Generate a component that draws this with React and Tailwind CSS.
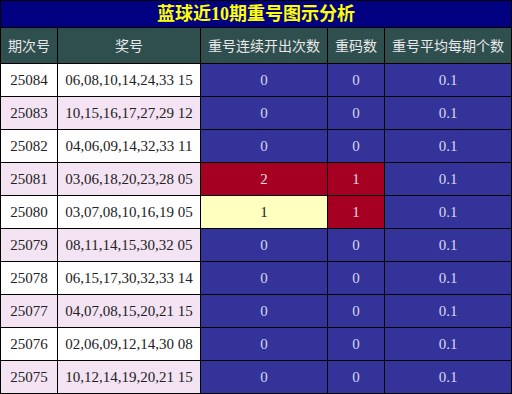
import React from "react";

const rows = [
  ["25084", "06,08,10,14,24,33 15", "0", "0", "0.1"],
  ["25083", "10,15,16,17,27,29 12", "0", "0", "0.1"],
  ["25082", "04,06,09,14,32,33 11", "0", "0", "0.1"],
  ["25081", "03,06,18,20,23,28 05", "2", "1", "0.1"],
  ["25080", "03,07,08,10,16,19 05", "1", "1", "0.1"],
  ["25079", "08,11,14,15,30,32 05", "0", "0", "0.1"],
  ["25078", "06,15,17,30,32,33 14", "0", "0", "0.1"],
  ["25077", "04,07,08,15,20,21 15", "0", "0", "0.1"],
  ["25076", "02,06,09,12,14,30 08", "0", "0", "0.1"],
  ["25075", "10,12,14,19,20,21 15", "0", "0", "0.1"],
];

const BLUE = "bg-[#333399] text-[#d8d8f0]";
const RED = "bg-[#a50021] text-[#f0dce2]";
const YELLOW = "bg-[#ffffc0] text-[#222222]";

function streakCls(v) {
  if (v === "2") return RED;
  if (v === "1") return YELLOW;
  return BLUE;
}

export default function App() {
  return (
    <div className="w-[512px] h-[394px] bg-black p-px">
      <div className="grid grid-cols-[56px_142px_126px_56px_126px] grid-rows-[26px_35px_repeat(10,32px)] gap-px font-['Liberation_Serif','Noto_Sans_CJK_SC',serif] text-[15px]">
        <div className="col-span-5 bg-[#000080] text-[#ffff00] font-bold text-[18px] flex items-center justify-center font-['Liberation_Serif','Noto_Sans_CJK_SC',serif]">
          蓝球近10期重号图示分析
        </div>
        {["期次号", "奖号", "重号连续开出次数", "重码数", "重号平均每期个数"].map((h) => (
          <div
            key={h}
            className="bg-[#2f4f4f] text-[#e8e8e8] text-[14px] flex items-center justify-center font-['Noto_Sans_CJK_SC','Liberation_Sans',sans-serif]"
          >
            {h}
          </div>
        ))}
        {rows.map((r, i) => {
          const rowBg = i % 2 === 0 ? "bg-white" : "bg-[#f3e3f3]";
          return (
            <React.Fragment key={r[0]}>
              <div className={`${rowBg} text-[#222222] flex items-center justify-center`}>{r[0]}</div>
              <div className={`${rowBg} text-[#222222] flex items-center justify-center`}>{r[1]}</div>
              <div className={`${streakCls(r[2])} flex items-center justify-center`}>{r[2]}</div>
              <div className={`${r[3] !== "0" ? RED : BLUE} flex items-center justify-center`}>{r[3]}</div>
              <div className={`${BLUE} flex items-center justify-center`}>{r[4]}</div>
            </React.Fragment>
          );
        })}
      </div>
    </div>
  );
}
